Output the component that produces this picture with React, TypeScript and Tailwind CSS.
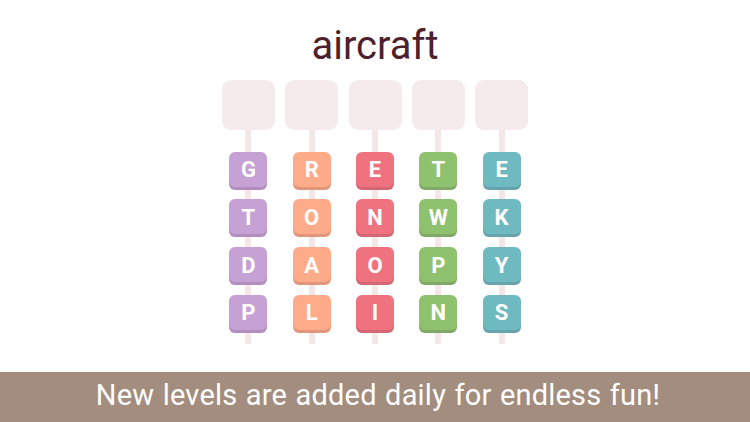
import React from "react";

type Column = { letters: string[]; face: string };

const columns: Column[] = [
  { letters: ["G", "T", "D", "P"], face: "bg-[#c6a1d3]" },
  { letters: ["R", "O", "A", "L"], face: "bg-[#fdab88]" },
  { letters: ["E", "N", "O", "I"], face: "bg-[#ef737e]" },
  { letters: ["T", "W", "P", "N"], face: "bg-[#8fc26f]" },
  { letters: ["E", "K", "Y", "S"], face: "bg-[#6fb9c1]" },
];

export default function App() {
  return (
    <div className="flex h-[422px] w-[750px] flex-col overflow-hidden bg-white font-['Roboto',sans-serif]">
      <div className="flex flex-1 flex-col items-center pt-[26px]">
        <h1 className="h-[40px] text-[40px] leading-none font-normal text-[#4e1f2c]">aircraft</h1>

        <div className="mt-[14px] flex gap-x-[10.3px]">
          {columns.map((col, i) => (
            <WordColumn key={i} column={col} />
          ))}
        </div>
      </div>

      <div className="flex h-[50px] items-center justify-center bg-[#a38d7e] pb-[3px] pl-[6px]">
        <p className="text-[29px] leading-none font-normal tracking-[0.2px] whitespace-nowrap text-white [word-spacing:1px]">
          New levels are added daily for endless fun!
        </p>
      </div>
    </div>
  );
}

function WordColumn({ column }: { column: Column }) {
  return (
    <div className="flex w-[53px] flex-col items-center">
      <div className="h-[50px] w-[53px] rounded-[9px] bg-[#f5ebec]" />
      <div className="flex w-full flex-col items-center gap-y-[9.7px] bg-[linear-gradient(#f5e6e8,#f5e6e8)] bg-[length:6px_100%] bg-center bg-no-repeat pt-[21.7px] pb-[11.3px]">
        {column.letters.map((letter, j) => (
          <div
            key={j}
            className={`flex h-[38px] w-[38px] items-center justify-center rounded-[6px] pb-[2px] text-[22px] font-bold text-white shadow-[inset_0_-3px_0_rgba(60,30,60,0.14)] ${column.face}`}
          >
            {letter}
          </div>
        ))}
      </div>
    </div>
  );
}
